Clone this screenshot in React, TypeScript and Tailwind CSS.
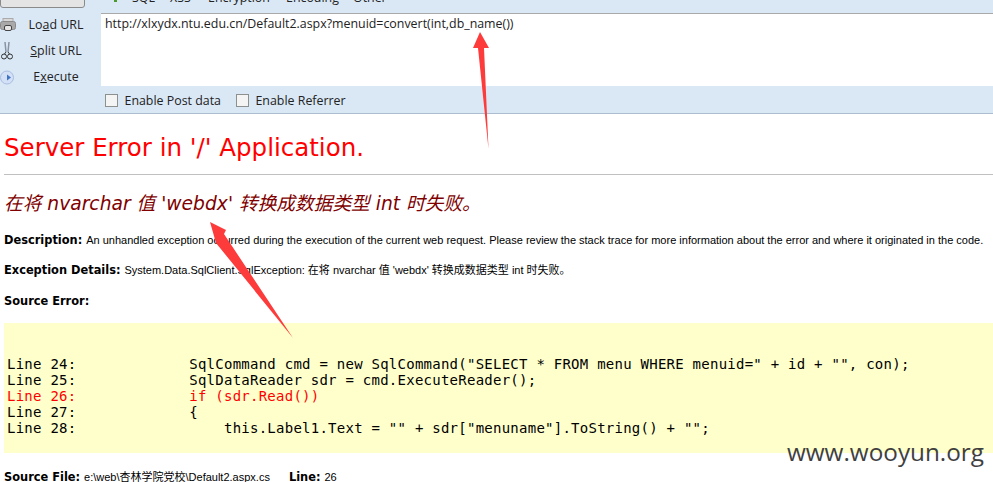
import React from "react";

const uiFont = "font-['Open_Sans','Noto_Sans',sans-serif]";
const boldFont = "font-['DejaVu_Sans',sans-serif] font-bold text-[11.4px]";
const bodyFont = "font-['Liberation_Sans','Noto_Sans_CJK_SC',sans-serif]";

const SideButton = ({ icon, children }: { icon: React.ReactNode; children: React.ReactNode }) => (
  <div className="flex h-[26px] items-center">
    <div className="w-[28px] shrink-0">{icon}</div>
    <div className="w-[56px] whitespace-nowrap text-center text-[12.4px] text-[#222]">{children}</div>
  </div>
);

const PrinterIcon = () => (
  <svg width="16" height="16" viewBox="0 0 16 16">
    <rect x="3" y="1.5" width="10" height="4" fill="#d8d8d8" stroke="#aaa" />
    <rect x="0.5" y="4.5" width="15" height="8" rx="2" fill="#a9a9a9" stroke="#8a8a8a" />
    <rect x="4.5" y="8.5" width="7" height="5" rx="1.5" fill="#e6e6e6" stroke="#444" />
  </svg>
);

const ScissorsIcon = () => (
  <svg className="ml-[1px]" width="12" height="20" viewBox="0 0 12 20" fill="none" stroke="#333" strokeWidth="1">
    <path d="M4 1 L5 11 M8 1 L7 11" stroke="#8a93a3" strokeWidth="1.5" />
    <circle cx="3" cy="15.5" r="2.5" />
    <circle cx="9" cy="15.5" r="2.5" />
    <path d="M5 11 L3.5 13 M7 11 L8.5 13" />
  </svg>
);

const PlayIcon = () => (
  <svg width="15" height="15" viewBox="0 0 15 15">
    <circle cx="7" cy="7.5" r="6.5" fill="#d3e0f5" stroke="#a9bde0" />
    <path d="M7 4.5 L11 7.5 L7 10.5 Z" fill="#3f74c4" />
  </svg>
);

const Check = ({ label }: { label: string }) => (
  <div className="flex items-center gap-[6.5px]">
    <span className="h-[13px] w-[13px] border border-[#8e8f8f] bg-[#f4f4f4]" />
    <span className="text-[12.4px] text-[#222]">{label}</span>
  </div>
);

const codeLines = [
  { text: "Line 24:             SqlCommand cmd = new SqlCommand(\"SELECT * FROM menu WHERE menuid=\" + id + \"\", con);" },
  { text: "Line 25:             SqlDataReader sdr = cmd.ExecuteReader();" },
  { text: "Line 26:             if (sdr.Read())", red: true },
  { text: "Line 27:             {" },
  { text: "Line 28:                 this.Label1.Text = \"\" + sdr[\"menuname\"].ToString() + \"\";" },
];

export default function App() {
  return (
    <div className="relative h-[482px] w-[993px] overflow-hidden bg-white">
      {/* hackbar */}
      <div className={`bg-[#dae8f6] ${uiFont}`}>
        <div className="flex h-[13px] items-start overflow-hidden">
          <div className="-mt-[12px] h-[20px] w-[85px] shrink-0 rounded-b-[3px] border border-[#8a8a8a] bg-[#e4e4e4]" />
          <div className="ml-[29px] h-[2px] w-[3px] shrink-0 bg-[#4a9a2a]" />
          <div className="-mt-[10px] ml-[15px] flex text-[12.4px] leading-[16px] text-[#222]">
            <span className="w-[38px]">SQL</span>
            <span className="w-[38px]">XSS</span>
            <span className="w-[78px]">Encryption</span>
            <span className="w-[67px]">Encoding</span>
            <span>Other</span>
          </div>
        </div>
        <div className="flex h-[73px]">
          <div className="-mt-[1px] w-[101px] shrink-0">
            <SideButton icon={<PrinterIcon />}>
              Lo<span className="underline">a</span>d URL
            </SideButton>
            <SideButton icon={<ScissorsIcon />}>
              <span className="underline">S</span>plit URL
            </SideButton>
            <SideButton icon={<PlayIcon />}>
              E<span className="underline">x</span>ecute
            </SideButton>
          </div>
          <div className="flex-1 border-t border-[#a9a9a9] bg-white px-[4px] text-[12.4px] leading-[20px] text-[#222]">
            http://xlxydx.ntu.edu.cn/Default2.aspx?menuid=convert(int,db_name())
          </div>
        </div>
        <div className="flex h-[28px] items-center gap-[15px] border-b border-[#adbdd0] pl-[105px] pt-[3px]">
          <Check label="Enable Post data" />
          <Check label="Enable Referrer" />
        </div>
      </div>

      {/* error page */}
      <div className="pl-[4px]">
        <h1 className="mt-[18px] font-['DejaVu_Sans',sans-serif] text-[24.5px] leading-[32px] text-[#ff0000]">
          Server Error in '/' Application.
        </h1>
        <div className="mt-[10px] h-px bg-[#c0c0c0]" />
        <h2 className="mt-[16px] font-['DejaVu_Sans','Noto_Sans_CJK_SC',sans-serif] text-[18.7px] italic leading-[26px] text-[#800000]">
          在将 nvarchar 值 'webdx' 转换成数据类型 int 时失败。
        </h2>
        <p className={`mt-[16px] text-[11px] leading-[15px] text-black ${bodyFont}`}>
          <b className={boldFont}>Description: </b>
          An unhandled exception occurred during the execution of the current web request. Please review the stack trace for more information about the error and where it originated in the code.
        </p>
        <p className={`mt-[15px] text-[11px] leading-[15px] text-black ${bodyFont}`}>
          <b className={boldFont}>Exception Details: </b>
          System.Data.SqlClient.SqlException: 在将 nvarchar 值 'webdx' 转换成数据类型 int 时失败。
        </p>
        <p className={`mt-[16px] leading-[15px] text-black ${boldFont}`}>Source Error:</p>

        <div className="mt-[14px] h-[130px] bg-[#ffffcc] pl-[3px] pt-[33px] font-['DejaVu_Sans_Mono',monospace] text-[14px] leading-[16px] tracking-[0.25px] text-black">
          {codeLines.map((line) => (
            <div key={line.text} className={`whitespace-pre ${line.red ? "text-[#ff0000]" : ""}`}>
              {line.text}
            </div>
          ))}
        </div>

        <p className={`mt-[17px] text-[11px] leading-[15px] text-black ${bodyFont}`}>
          <b className={boldFont}>Source File: </b>
          e:\web\杏林学院党校\Default2.aspx.cs
          <b className={`ml-[19px] ${boldFont}`}>Line: </b>
          26
        </p>
      </div>

      {/* annotations drawn over the screenshot */}
      <svg className="absolute left-0 top-0" width="993" height="482" viewBox="0 0 993 482">
        <path d="M480 32 L489 48 L484 48 L488.5 149 L478 48 L473 48 Z" fill="#fd3b3b" />
        <path d="M210 222 L226 230 L224 234 L293 338 L216 243 Z" fill="#fd3b3b" />
      </svg>
      <div className="absolute bottom-[14px] right-[9px] font-['Open_Sans',sans-serif] text-[24.3px] leading-[32px] text-[#3f3f3f]">
        www.wooyun.org
      </div>
    </div>
  );
}
